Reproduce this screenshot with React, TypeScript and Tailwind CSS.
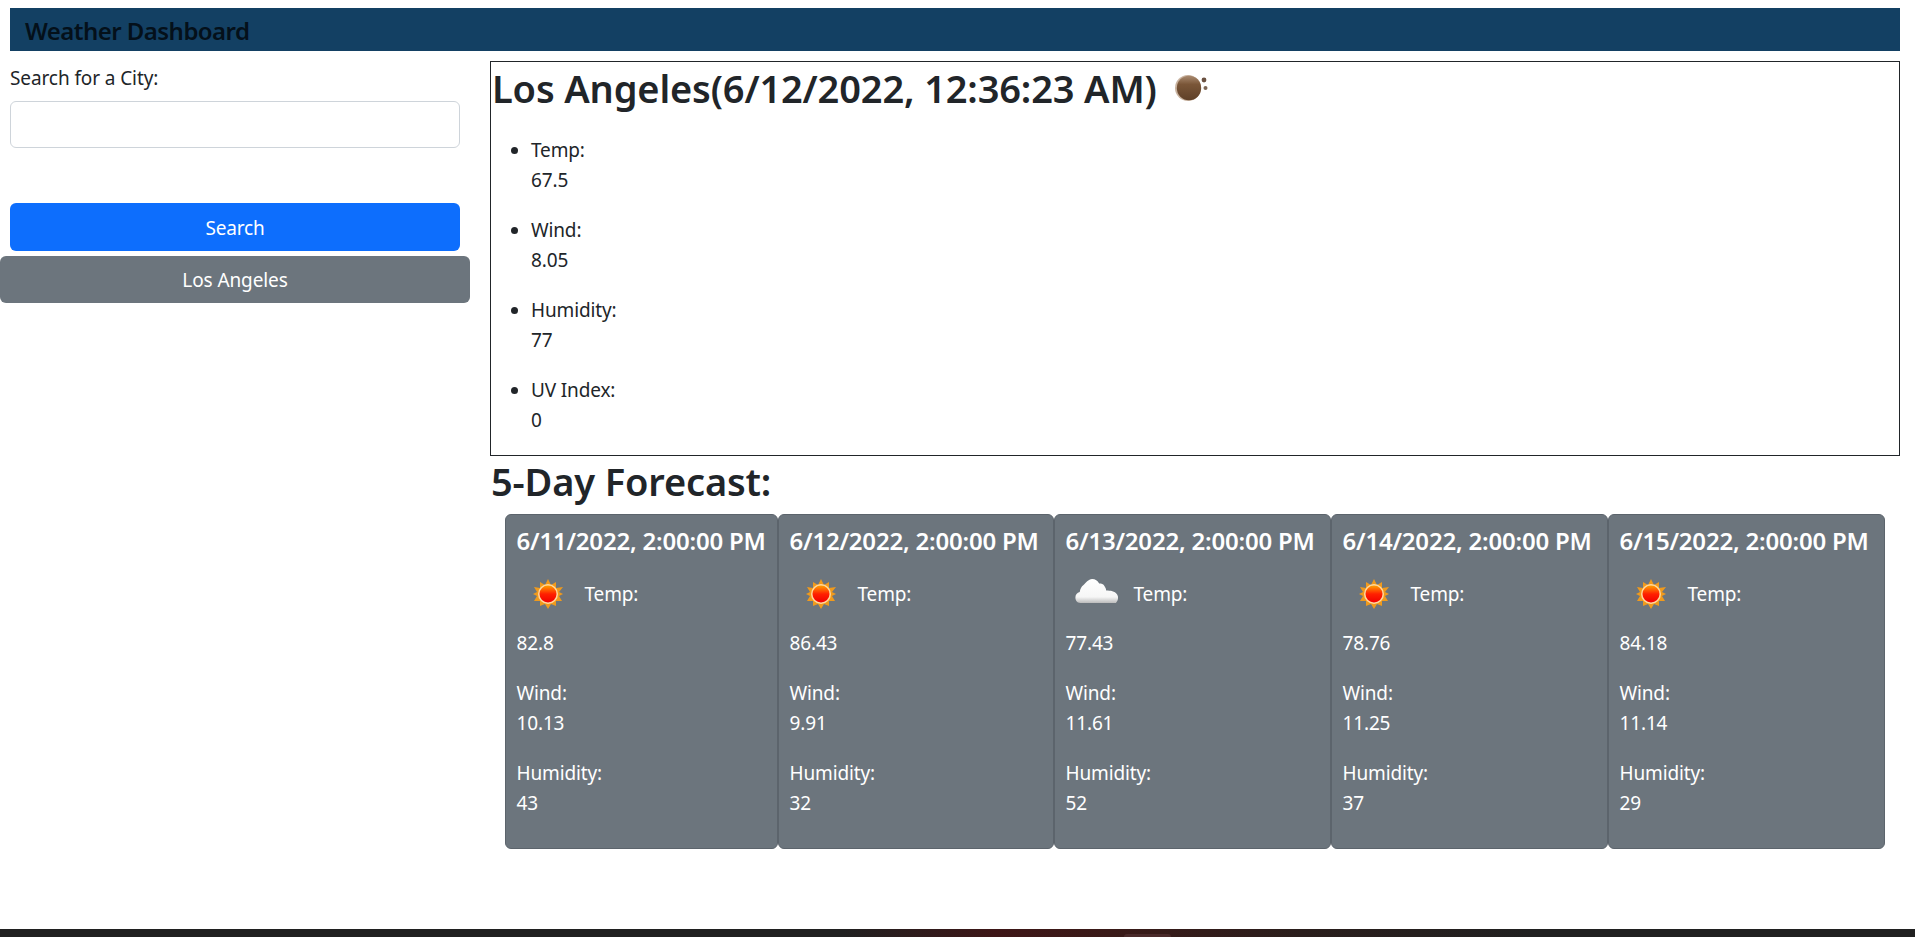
const font = "font-['Noto_Sans','Open_Sans',sans-serif]";

const days = [
  { date: "6/11/2022, 2:00:00 PM", temp: "82.8", wind: "10.13", humidity: "43", icon: "sun" },
  { date: "6/12/2022, 2:00:00 PM", temp: "86.43", wind: "9.91", humidity: "32", icon: "sun" },
  { date: "6/13/2022, 2:00:00 PM", temp: "77.43", wind: "11.61", humidity: "52", icon: "cloud" },
  { date: "6/14/2022, 2:00:00 PM", temp: "78.76", wind: "11.25", humidity: "37", icon: "sun" },
  { date: "6/15/2022, 2:00:00 PM", temp: "84.18", wind: "11.14", humidity: "29", icon: "sun" },
];

const current = [
  { label: "Temp:", value: "67.5" },
  { label: "Wind:", value: "8.05" },
  { label: "Humidity:", value: "77" },
  { label: "UV Index:", value: "0" },
];

function SunIcon() {
  return (
    <svg width="62" height="62" viewBox="0 0 62 62" className="shrink-0">
      <defs>
        <linearGradient id="sunFill" x1="0" y1="0" x2="0" y2="1">
          <stop offset="0" stopColor="#ffa000" />
          <stop offset="0.5" stopColor="#ff2000" />
          <stop offset="1" stopColor="#f00000" />
        </linearGradient>
      </defs>
      <polygon
        fill="#f09a1c"
        points="31,16 34,22 39,19 39,25 46,24 42,29 46,31 42,33 45,38 39,38 39,43 34,41 31,46 28,41 23,43 23,38 17,38 20,33 16,31 20,29 17,24 23,25 23,19 28,22"
      />
      <circle cx="31" cy="31" r="10" fill="#ffd9a0" />
      <circle cx="31" cy="31" r="8.5" fill="url(#sunFill)" />
    </svg>
  );
}

function CloudIcon() {
  return (
    <svg width="62" height="62" viewBox="0 0 62 62" className="shrink-0">
      <defs>
        <linearGradient id="cloudFill" x1="0" y1="0" x2="0" y2="1">
          <stop offset="0" stopColor="#ffffff" />
          <stop offset="0.75" stopColor="#f6f6f6" />
          <stop offset="1" stopColor="#bdbdbd" />
        </linearGradient>
      </defs>
      <path
        fill="url(#cloudFill)"
        transform="translate(31 28) scale(1.08) translate(-31.500 -28)"
        d="M16 39c-3 0-4.500-2.500-4.500-5 0-2.500 1.500-4.500 4-5 .5-3 1.500-5 3.500-6.500 2-1.500 4.500-5.500 8-5.500 3 0 5 1.500 6.500 4 2 0 4 .5 5 2.500 1 1.500 1.500 3 1.500 4 4 0 8 .5 10 3.500 1.500 2 1.500 5.500-1 8z"
      />
    </svg>
  );
}

function MoonIcon() {
  return (
    <svg width="62" height="62" viewBox="0 0 62 62" className="shrink-0">
      <defs>
        <linearGradient id="moonFill" x1="0" y1="0" x2="0" y2="1">
          <stop offset="0" stopColor="#a98a70" />
          <stop offset="0.35" stopColor="#7a5638" />
          <stop offset="1" stopColor="#5f4028" />
        </linearGradient>
      </defs>
      <circle cx="31" cy="31" r="13" fill="#c9b3a0" />
      <circle cx="32" cy="31" r="12.2" fill="url(#moonFill)" />
      <circle cx="47" cy="23" r="2.4" fill="#6a5040" />
      <circle cx="48.500" cy="31" r="2" fill="#7c6656" />
    </svg>
  );
}

export default function App() {
  return (
    <div className={`flex h-[937px] flex-col overflow-hidden bg-white text-[#212529] ${font}`}>
      <header className="ml-[10px] mr-[15px] mt-2 h-[43px] bg-[#134063] pl-[15px] text-[24px] font-semibold leading-[45px] tracking-[-0.55px] text-[#04101a]">
        Weather Dashboard
      </header>

      <div className="flex flex-1">
        <aside className="flex w-[470px] shrink-0 flex-col">
          <label className="mx-[10px] mt-[12px] text-[19px] leading-[30px] tracking-[-0.1px]">Search for a City:</label>
          <input className="mx-[10px] mt-[8px] h-[47px] rounded-[6px] border border-[#ced4da] bg-white" />
          <button className="mx-[10px] mt-[55px] h-[48px] rounded-[6px] bg-[#0d6efd] pt-[2px] text-[19px] tracking-[-0.2px] text-white">
            Search
          </button>
          <button className="mt-[5px] h-[47px] rounded-[6px] bg-[#6c757d] pt-[2px] text-[19px] tracking-[-0.1px] text-white">
            Los Angeles
          </button>
        </aside>

        <main className="ml-[20px] mr-[15px] flex min-w-0 flex-1 flex-col">
          <section className="mt-[10px] h-[395px] border border-[#212529]">
            <h2 className="flex h-[52px] items-center pl-[1px] text-[38px] font-semibold tracking-[-0.15px]">
              Los Angeles(6/12/2022, 12:36:23 AM)
              <MoonIcon />
            </h2>
            <ul className="ml-[40px] mt-[21px] flex list-disc flex-col gap-[20px] text-[19px] leading-[30px] tracking-[-0.15px]">
              {current.map((item) => (
                <li key={item.label}>
                  <div>{item.label}</div>
                  <div>{item.value}</div>
                </li>
              ))}
            </ul>
          </section>

          <h2 className="ml-[1px] mt-[3px] h-[55px] text-[38px] font-semibold leading-[45px] tracking-[-0.15px]">5-Day Forecast:</h2>

          <div className="ml-[15px] grid grid-cols-[273px_276px_277px_277px_277px]">
            {days.map((day) => (
              <div
                key={day.date}
                className="h-[335px] rounded-[6px] border border-[#5c646c] bg-[#6c757d] px-[10.5px] text-[19px] leading-[30px] tracking-[-0.15px] text-white"
              >
                <h5 className="mt-[8px] whitespace-nowrap text-[24px] font-semibold leading-[36px] tracking-[-0.2px]">{day.date}</h5>
                <div className="mt-[4px] flex h-[62px] items-center">
                  {day.icon === "sun" ? <SunIcon /> : <CloudIcon />}
                  <span className="ml-[6px]">Temp:</span>
                </div>
                <div className="mt-[3px]">{day.temp}</div>
                <div className="mt-[20px]">Wind:</div>
                <div>{day.wind}</div>
                <div className="mt-[20px]">Humidity:</div>
                <div>{day.humidity}</div>
              </div>
            ))}
          </div>
        </main>
      </div>

      <div className="relative h-2 shrink-0 bg-[linear-gradient(90deg,#202020_44%,#3e1617_52%,#3a1a18_58%,#2a1e1c_68%,#202020_80%)]">
        <div className="absolute bottom-0 left-[1124px] h-[3px] w-[47px] rounded-t-[3px] bg-[#4a2a2a]" />
      </div>
    </div>
  );
}
